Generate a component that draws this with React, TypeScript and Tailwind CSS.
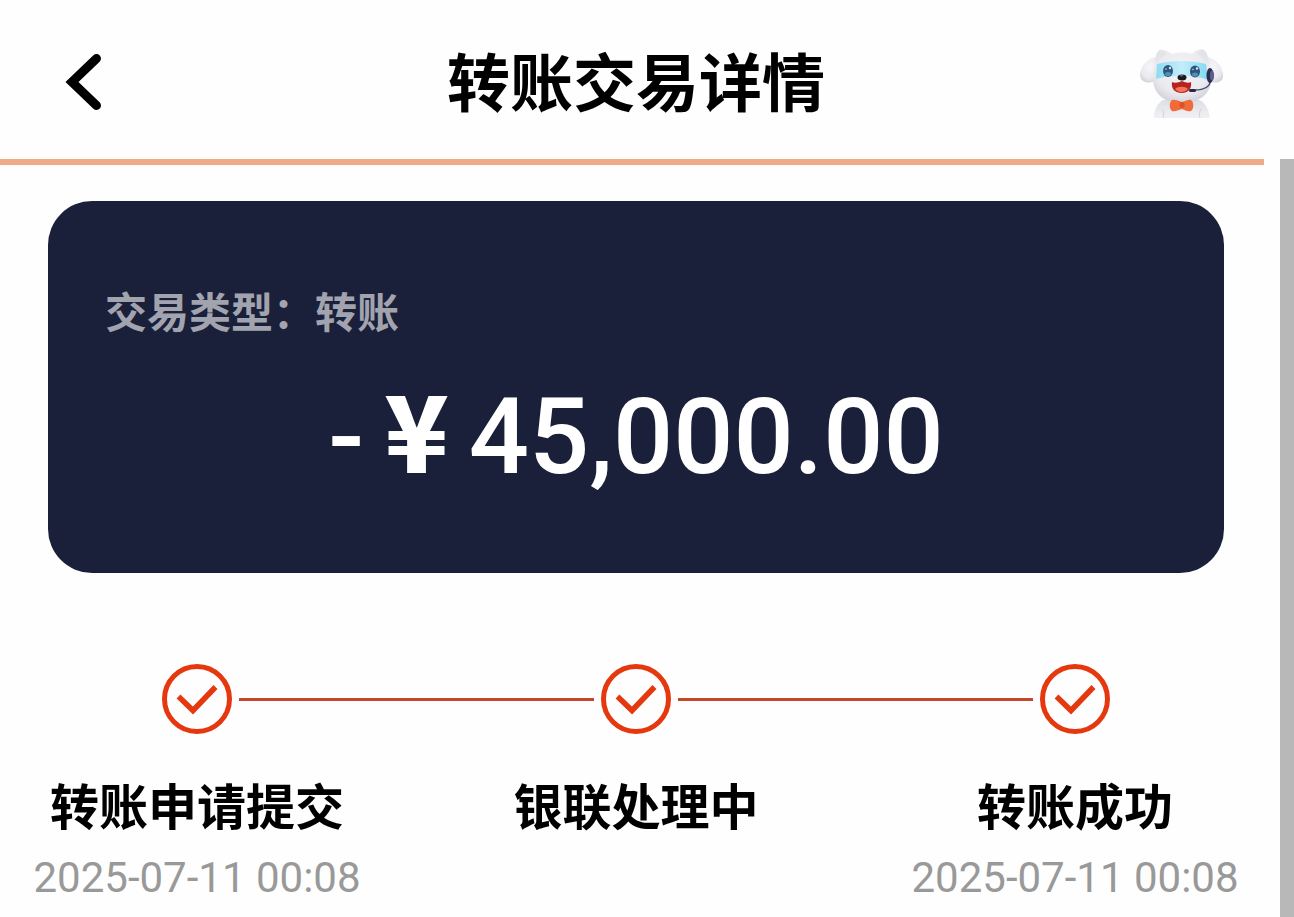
type Step = { label: string; time?: string };

const steps: Step[] = [
  { label: "转账申请提交", time: "2025-07-11 00:08" },
  { label: "银联处理中" },
  { label: "转账成功", time: "2025-07-11 00:08" },
];

function BackIcon() {
  return (
    <svg viewBox="0 0 44 64" className="h-16 w-11" fill="none" aria-hidden="true">
      <path d="M34.500 8.500 10 32 34.500 55.500" stroke="#000" strokeWidth="9" strokeLinecap="round" />
    </svg>
  );
}

function Mascot() {
  return (
    <svg viewBox="0 0 84 70" className="h-[70px] w-[84px]" aria-hidden="true">
      <defs>
        <radialGradient id="fur" cx="50%" cy="38%" r="65%">
          <stop offset="0" stopColor="#f6f6f9" />
          <stop offset=".7" stopColor="#e9e9ee" />
          <stop offset="1" stopColor="#cfd0d8" />
        </radialGradient>
        <linearGradient id="visor" x1="0" x2="1" y1="0" y2="0">
          <stop offset="0" stopColor="#8edbf1" />
          <stop offset=".5" stopColor="#c5edfa" />
          <stop offset="1" stopColor="#83d8f0" />
        </linearGradient>
        <linearGradient id="body" x1="0" x2="0" y1="0" y2="1">
          <stop offset="0" stopColor="#dedfe5" />
          <stop offset="1" stopColor="#f1f1f5" />
        </linearGradient>
      </defs>
      <path d="M14 69c0-8 3-14 9-18h37c6 4 9 10 10 18Z" fill="url(#body)" />
      <path d="M22 60c2 3 2 6 1 9M61 60c-2 3-2 6-1 9" stroke="#d0d1d9" fill="none" />
      <path d="M17 8C7 9 1 17 0 25c0 7 6 10 12 8 5-2 8-6 8-12Z" fill="url(#fur)" />
      <path d="M66 8c10 1 16 9 17 17 1 7-5 10-11 8-5-2-8-6-8-12Z" fill="url(#fur)" />
      <path d="M15 15c0-7 2-13 5-14 4-1 9 2 12 4 6-2 14-2 20 0 3-3 8-6 12-4 3 2 5 8 5 14l2 14c1 15-11 25-29 25S13 45 13 29Z" fill="url(#fur)" />
      <path d="M20 2c-2 4-3 8-3 12 2-4 6-7 10-9-2-2-5-4-7-3ZM64 2c2 4 3 8 3 12-2-4-6-7-10-9 2-2 5-4 7-3Z" fill="#e3e4e9" />
      <path d="M17 15c16-4 34-4 49 0l2 16c-8-3-16-4-27-4s-19 1-25 3Z" fill="url(#visor)" />
      <ellipse cx="28" cy="22" rx="5" ry="6" fill="#2c567c" />
      <ellipse cx="55" cy="22.500" rx="5" ry="6" fill="#2c567c" />
      <ellipse cx="28" cy="25" rx="3" ry="2" fill="#538fb5" />
      <ellipse cx="55" cy="25.500" rx="3" ry="2" fill="#538fb5" />
      <circle cx="30" cy="19" r="1.200" fill="#c9eaf5" />
      <circle cx="57" cy="19.500" r="1.200" fill="#c9eaf5" />
      <circle cx="26" cy="20" r=".8" fill="#b6deef" />
      <circle cx="53" cy="20.500" r=".8" fill="#b6deef" />
      <ellipse cx="42" cy="28.500" rx="4.500" ry="3" fill="#18171d" />
      <ellipse cx="41.500" cy="26.800" rx="2" ry=".7" fill="#696872" />
      <path d="M32 33c2 1 6 1 10-1 4 2 7 2 9 1 1 7-3 11-9 11-7 0-11-4-10-11Z" fill="#b62420" />
      <path d="M35 40c3-3 10-3 13 0-3 4-10 4-13 0Z" fill="#f47458" />
      <path d="M71 31c-1 6-6 10-16 10" stroke="#4a4b66" strokeWidth="1.400" fill="none" />
      <ellipse cx="70" cy="26.500" rx="3.500" ry="7.500" fill="#2b2d53" />
      <ellipse cx="72" cy="26.500" rx="2" ry="5" fill="#5c5f8b" />
      <rect x="49" y="40" width="7" height="3" rx="1.500" fill="#25264c" />
      <path d="M32 51c3-1 6 1 10 2 4-1 7-3 9-2 3 2 3 9 0 11-3 1-6-1-9-2-4 1-7 3-10 2-3-2-3-9 0-11Z" fill="#f16a39" />
      <rect x="39.500" y="53" width="5" height="6" rx="2" fill="#dc5225" />
    </svg>
  );
}

function CheckIcon() {
  return (
    <svg viewBox="0 0 72 72" className="size-[72px]" fill="none" aria-hidden="true">
      <circle cx="36" cy="36" r="32.500" stroke="#e5380f" strokeWidth="5" />
      <path d="M17.500 33.500 32 47.500 54.500 24" stroke="#e5380f" strokeWidth="5.500" />
    </svg>
  );
}

function StepItem({ step }: { step: Step }) {
  return (
    <div className="flex w-[326px] shrink-0 flex-col items-center whitespace-nowrap">
      <CheckIcon />
      <p className="mt-[38px] text-[49px] leading-[72px] font-bold text-black">{step.label}</p>
      {step.time && (
        <time className="mt-2 font-[Roboto,sans-serif] text-[42px] leading-[50px] text-[#999999]">{step.time}</time>
      )}
    </div>
  );
}

function Connector() {
  return <div className="mx-[-121px] mt-[35px] h-[3px] flex-1 bg-[#c5472a]" />;
}

export default function App() {
  return (
    <div className="flex min-h-screen flex-col bg-[#fefefe] font-[Roboto,'Noto_Sans_CJK_SC',sans-serif]">
      <header className="mr-[22px] flex h-[159px] items-center justify-between pr-12 pl-[62px]">
        <button type="button" aria-label="返回" className="flex w-[84px] items-center pt-1">
          <BackIcon />
        </button>
        <h1 className="pt-2.5 text-[63px] leading-[92px] font-bold text-black">转账交易详情</h1>
        <button type="button" aria-label="客服" className="flex w-[98px] justify-end pt-2">
          <Mascot />
        </button>
      </header>
      <div className="flex flex-1">
        <main className="min-w-0 flex-1 pr-2">
          <div className="mr-2 h-[6px] bg-[#f1aa87]" />
          <section className="mx-12 mt-9 h-[372px] rounded-[44px] bg-[#1a1f3a] px-[57px] pt-[82px]">
            <p className="text-[42px] leading-[62px] font-bold text-[#a1a3ae]">交易类型：转账</p>
            <p className="mt-7 flex items-baseline justify-center gap-5 text-[106px] leading-[128px] font-medium whitespace-nowrap text-white">
              <span>-</span>
              <span className="font-['Noto_Sans_CJK_SC',sans-serif] leading-none font-black">¥</span>
              <span>45,000.00</span>
            </p>
          </section>
          <section className="mt-[90px] flex items-start px-[34px]">
            <StepItem step={steps[0]} />
            <Connector />
            <StepItem step={steps[1]} />
            <Connector />
            <StepItem step={steps[2]} />
          </section>
        </main>
        <div className="w-[14px] bg-[#b8b8b8]" />
      </div>
    </div>
  );
}
